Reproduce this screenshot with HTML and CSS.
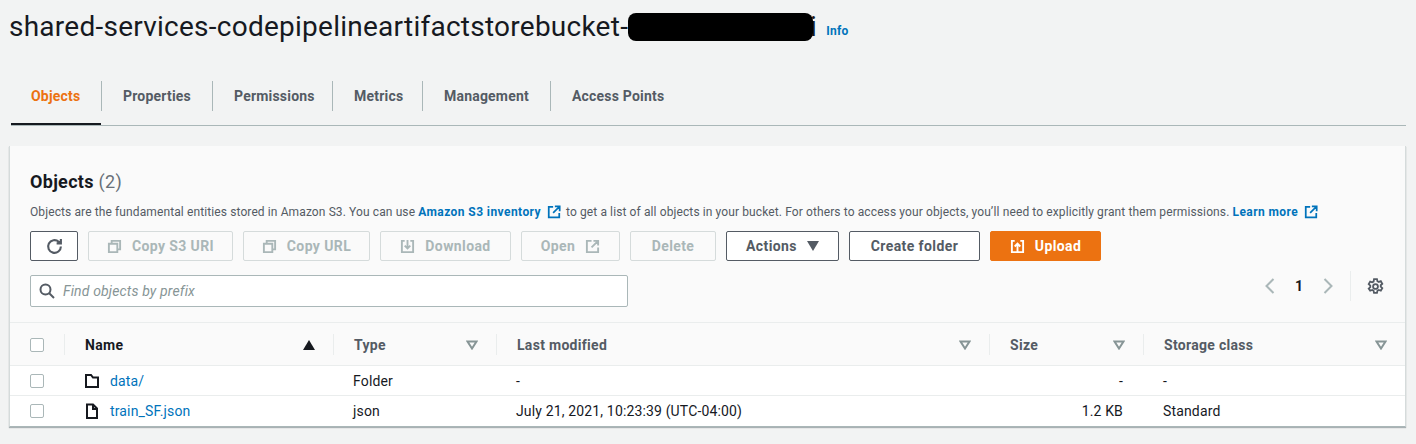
FILE: index.html
```html
<!DOCTYPE html>
<html lang="en">
<head>
<meta charset="utf-8">
<title>S3 bucket</title>
<link rel="stylesheet" href="styles.css">
</head>
<body>
<header class="title-row">
  <h1 class="title">shared-services-codepipelineartifactstorebucket-8<span class="redact"></span>i</h1>
  <a class="info">Info</a>
</header>
<nav class="tabs">
  <a class="tab active">Objects</a>
  <a class="tab">Properties</a>
  <a class="tab">Permissions</a>
  <a class="tab">Metrics</a>
  <a class="tab">Management</a>
  <a class="tab">Access Points</a>
</nav>
<main class="card">
  <div class="card-head">
    <h2 class="card-title">Objects <span class="count">(2)</span></h2>
    <p class="desc">Objects are the fundamental entities stored in Amazon S3. You can use <a class="link">Amazon S3 inventory</a><svg class="ext" viewBox="0 0 16 16"><path d="M7 2H2v12h12V9M9 1.500h5.500V7M14 2L7 9"/></svg>to get a list of all objects in your bucket. For others to access your objects, you’ll need to explicitly grant them permissions. <a class="link">Learn more</a><svg class="ext" viewBox="0 0 16 16"><path d="M7 2H2v12h12V9M9 1.500h5.500V7M14 2L7 9"/></svg></p>
    <div class="actions">
      <button class="btn refresh"><svg class="ico big" viewBox="0 0 16 16"><path d="M14 8a6 6 0 1 1-2-4.500L14 5M14 1v4h-4"/></svg></button>
      <button class="btn off w145"><svg class="ico" viewBox="0 0 16 16"><path d="M5 5V2h9v9h-3M2 5h9v9H2z"/></svg>Copy S3 URI</button>
      <button class="btn off w127"><svg class="ico" viewBox="0 0 16 16"><path d="M5 5V2h9v9h-3M2 5h9v9H2z"/></svg>Copy URL</button>
      <button class="btn off w131"><svg class="ico" viewBox="0 0 16 16"><path d="M5 2H2v12h12V2h-3M8 1v9M5 7l3 3 3-3"/></svg>Download</button>
      <button class="btn off w99">Open<svg class="ico" viewBox="0 0 16 16"><path d="M7 2H2v12h12V9M9 2h5v5M14 2L7 9"/></svg></button>
      <button class="btn off w86">Delete</button>
      <button class="btn w113">Actions<svg class="caret" viewBox="0 0 12 10"><path d="M0 0h12L6 10z"/></svg></button>
      <button class="btn w131">Create folder</button>
      <button class="btn primary"><svg class="ico" viewBox="0 0 16 16"><path d="M5 2H2v12h12V2h-3M8 14V5M5 8l3-3 3 3"/></svg>Upload</button>
    </div>
    <div class="filter-row">
      <label class="search">
        <svg class="search-ico" viewBox="0 0 16 16"><circle cx="6.500" cy="6.500" r="5"/><path d="M10 10l5 5"/></svg>
        <span class="placeholder">Find objects by prefix</span>
      </label>
      <div class="pager">
        <svg class="chev" viewBox="0 0 10 16"><path d="M9 1L2 8l7 7"/></svg>
        <span class="page">1</span>
        <svg class="chev" viewBox="0 0 10 16"><path d="M1 1l7 7-7 7"/></svg>
        <span class="pager-sep"></span>
        <svg class="gear" viewBox="0 0 16 16"><circle cx="8" cy="8" r="2.300"/><path d="M6.600 1h2.800l.4 2 1.300.7 1.900-.7 1.400 2.400-1.500 1.400v1.400l1.500 1.400-1.400 2.400-1.900-.7-1.300.7-.4 2H6.600l-.4-2-1.300-.7-1.900.7L1.600 10l1.500-1.400V7.200L1.600 5.800 3 3.400l1.900.7 1.300-.7z"/></svg>
      </div>
    </div>
  </div>
  <div class="row head">
    <div class="cell chk"><span class="box"></span></div>
    <div class="cell th sorted">Name<svg class="sort" viewBox="0 0 12 10"><path d="M6 0l6 10H0z"/></svg></div>
    <div class="cell th">Type<svg class="tri" viewBox="0 0 12 10"><path d="M1.500 1.500h9L6 8.500z"/></svg></div>
    <div class="cell th">Last modified<svg class="tri" viewBox="0 0 12 10"><path d="M1.500 1.500h9L6 8.500z"/></svg></div>
    <div class="cell th">Size<svg class="tri" viewBox="0 0 12 10"><path d="M1.500 1.500h9L6 8.500z"/></svg></div>
    <div class="cell th">Storage class<svg class="tri" viewBox="0 0 12 10"><path d="M1.500 1.500h9L6 8.500z"/></svg></div>
  </div>
  <div class="row body">
    <div class="cell chk"><span class="box"></span></div>
    <div class="cell"><svg class="file" viewBox="0 0 16 16"><path d="M2 2h5l2 2.500h5V14H2z"/></svg><a class="obj">data/</a></div>
    <div class="cell">Folder</div>
    <div class="cell">-</div>
    <div class="cell num">-</div>
    <div class="cell">-</div>
  </div>
  <div class="row body last">
    <div class="cell chk"><span class="box"></span></div>
    <div class="cell"><svg class="file" viewBox="0 0 16 16"><path d="M3 1.500h6l4 4V15H3zM9 1.500V6h4"/></svg><a class="obj">train_SF.json</a></div>
    <div class="cell">json</div>
    <div class="cell">July 21, 2021, 10:23:39 (UTC-04:00)</div>
    <div class="cell num">1.2 KB</div>
    <div class="cell">Standard</div>
  </div>
</main>
</body>
</html>
```
FILE: styles.css
```css
* { box-sizing: border-box; }
html, body { margin: 0; height: 444px; overflow: hidden; }
body { background: #f2f3f3; font-family: Roboto, "Noto Sans", sans-serif; font-size: 14px; letter-spacing: .15px; color: #16191f; }
svg { display: block; fill: none; stroke: currentColor; stroke-width: 2; flex: none; }

.title-row { display: flex; align-items: center; height: 54px; padding-left: 9px; }
.title { margin: 0; font-size: 28px; font-weight: 400; letter-spacing: .25px; line-height: 54px; white-space: nowrap; }
.redact { position: relative; display: inline-block; width: 185px; height: 28px; margin: 0 -3px 0 -16px; vertical-align: -5px; background: #000; border-radius: 8px; }
.info { margin-left: 9px; margin-top: 8px; font-size: 12px; font-weight: 700; letter-spacing: .3px; color: #0073bb; }

.tabs { display: grid; grid-template-columns: 90px 111px 120px 90px 128px 1fr; height: 72px; margin: 0 10px 20px 11px; padding-top: 12px; border-bottom: 1px solid #aab7b8; }
.tab { position: relative; display: flex; align-items: center; height: 59px; padding: 1px 0 0 22px; font-weight: 700; font-size: 14px; letter-spacing: .2px; color: #545b64; }
.tab + .tab::before { content: ""; position: absolute; left: 0; top: 15px; height: 30px; width: 1px; background: #aab7b8; }
.tab.active { color: #ec7211; padding: 2px 0 0 20px; border-bottom: 2px solid #16191f; }

.card { width: 1397px; margin-left: 9px; background: #fff; border-left: 1px solid #d5dbdb; border-right: 1px solid #d5dbdb; border-bottom: 1px solid #aab7b8; box-shadow: 0 1px 1px rgba(0,28,36,.3); }
.card-head { height: 177px; padding: 23px 20px 0; background: #fafafa; border-bottom: 1px solid #eaeded; }
.card-title { margin: 0; font-size: 18px; line-height: 26px; font-weight: 700; letter-spacing: .3px; }
.count { font-weight: 400; color: #687078; }
.desc { display: flex; align-items: center; margin: 8px 0 0; font-size: 12px; line-height: 18px; letter-spacing: .11px; color: #545b64; white-space: pre; }
.link { font-weight: 700; letter-spacing: .42px; color: #0073bb; }
.ext { width: 14px; height: 14px; margin: 0 5px 0 6px; color: #0073bb; }

.actions { display: flex; gap: 10px; margin-top: 10px; }
.btn { display: flex; align-items: center; justify-content: center; gap: 10px; height: 30px; padding: 0; background: #fff; border: 1px solid #545b64; border-radius: 2px; font: 700 14px Roboto, sans-serif; letter-spacing: .4px; color: #545b64; }
.btn.off { background: #fafafa; border-color: #d5dbdb; color: #aab7b8; }
.refresh { width: 48px; }
.w145 { width: 145px; } .w127 { width: 127px; } .w131 { width: 131px; }
.w99 { width: 99px; } .w86 { width: 95px; width: 86px; } .w113 { width: 113px; }
.primary { width: 111px; background: #ec7211; border-color: #ec7211; color: #fff; }
.ico { width: 15px; height: 15px; }
.ico.big { width: 17px; height: 17px; }
.caret { width: 12px; height: 10px; fill: currentColor; stroke: none; }

.filter-row { display: flex; justify-content: space-between; align-items: flex-start; margin-top: 14px; }
.search { display: flex; align-items: center; width: 598px; height: 32px; padding-left: 8px; background: #fff; border: 1px solid #aab7b8; border-radius: 2px; }
.search-ico { width: 16px; height: 16px; color: #545b64; }
.placeholder { margin-left: 8px; font-size: 14px; font-style: italic; color: #879596; }
.pager { display: flex; align-items: center; height: 30px; margin: -4px 1px 0 0; }
.chev { width: 11px; height: 16px; color: #aab7b8; }
.page { width: 48px; text-align: center; font-weight: 700; font-size: 14px; }
.pager-sep { width: 1px; height: 30px; margin: 0 16px; background: #eaeded; }
.gear { width: 17px; height: 17px; stroke-width: 1.700; color: #545b64; }

.row { display: grid; grid-template-columns: 54px 269px 163px 493px 154px 1fr; align-items: center; }
.row.head { height: 43px; padding-top: 1px; background: #fafafa; border-bottom: 1px solid #eaeded; }
.row.body { height: 30px; border-bottom: 1px solid #eaeded; }
.row.last { border-bottom: 0; }
.cell { display: flex; align-items: center; padding-left: 20px; min-width: 0; }
.box { width: 14px; height: 14px; background: #fff; border: 1px solid #aab7b8; border-radius: 2px; }
.th { justify-content: space-between; height: 21px; padding-right: 18px; border-left: 1px solid #eaeded; font-weight: 700; letter-spacing: .3px; color: #545b64; }
.th.sorted { color: #16191f; }
.sort { width: 12px; height: 10px; fill: #16191f; stroke: none; }
.tri { width: 12px; height: 10px; color: #879596; }
.file { width: 16px; height: 16px; margin-right: 10px; }
.obj { color: #0073bb; }
.num { justify-content: flex-end; padding-right: 20px; padding-left: 0; }
```
